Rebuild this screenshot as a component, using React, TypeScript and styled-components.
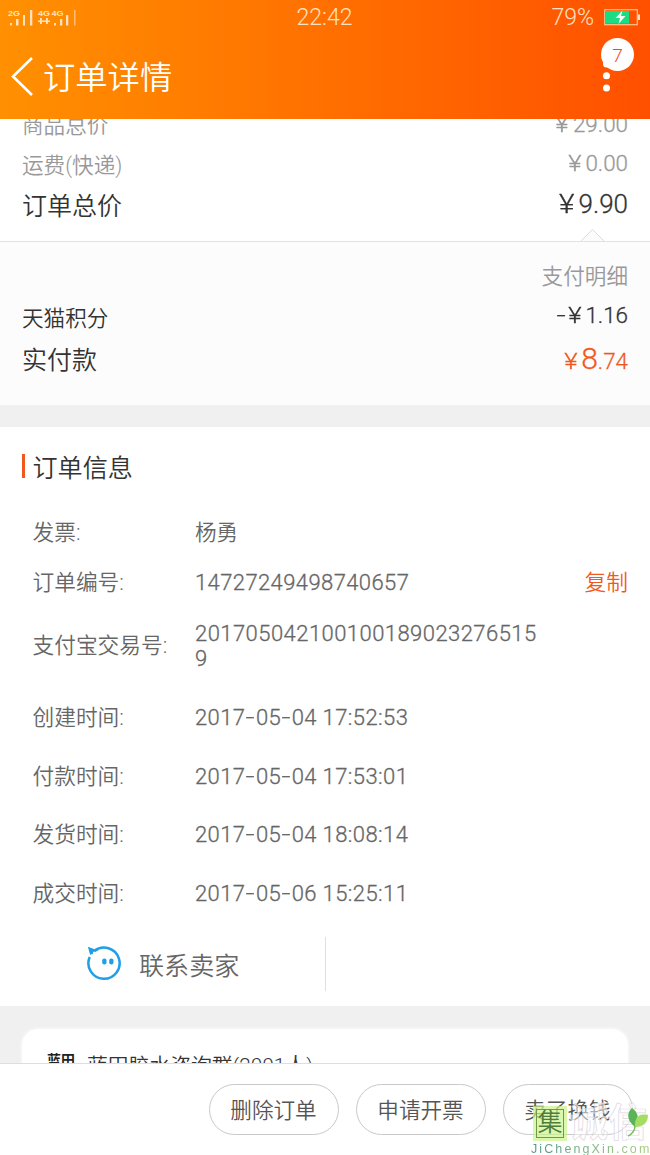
import React from "react";
import styled, { createGlobalStyle } from "styled-components";

const GlobalStyle = createGlobalStyle`
  * { box-sizing: border-box; }
  body { margin: 0; background: #f0f0f0; }
`;

const Screen = styled.div`
  position: relative;
  width: 650px;
  height: 1155px;
  overflow: hidden;
  display: flex;
  flex-direction: column;
  background: #f0f0f0;
  font-family: Roboto, "Noto Sans CJK SC", sans-serif;
  font-weight: 350;
  color: #666;
  white-space: nowrap;
`;

const Header = styled.header`
  height: 119px;
  flex: none;
  background: linear-gradient(to right, #ff9000, #ff5000);
  color: #fff;
`;

const StatusBar = styled.div`
  height: 35px;
  display: grid;
  grid-template-columns: 1fr auto 1fr;
  align-items: center;
  padding: 0 9px 0 8px;
  font-size: 23px;
  font-weight: 300;
  color: #ffe2c0;
`;

const StatusRight = styled.div`
  display: flex;
  justify-content: flex-end;
  align-items: center;
  gap: 10px;
  font-size: 23px;
`;

const NavBar = styled.div`
  height: 84px;
  display: flex;
  align-items: center;
  padding: 0 16px 0 11px;
`;

const PageTitle = styled.h1`
  margin: 2px auto 0 9px;
  font-size: 32.3px;
  font-weight: 350;
  line-height: 40px;
`;

const MoreButton = styled.div`
  position: relative;
  width: 33px;
  height: 56px;
  margin-bottom: 22px;
`;

const Badge = styled.span`
  position: absolute;
  top: 0;
  left: 0;
  width: 33px;
  height: 33px;
  border-radius: 50%;
  background: #fff;
  color: #ee4d22;
  font-size: 19px;
  line-height: 35px;
  text-align: center;
`;

const Totals = styled.section`
  position: relative;
  flex: none;
  height: 123px;
  padding: 0 22px 14px;
  display: flex;
  flex-direction: column;
  justify-content: flex-end;
  overflow: hidden;
  background: #fff;
  border-bottom: 1px solid #e2e2e2;
`;

const Payment = styled.section`
  flex: none;
  height: 163px;
  padding: 15px 22px 0;
  background: #fcfcfc;
`;

const OrderPanel = styled.section`
  flex: none;
  height: 579px;
  margin-top: 22px;
  padding: 26px 22px 15px;
  background: #fff;
  display: flex;
  flex-direction: column;
`;

const Notch = styled.svg`
  position: absolute;
  right: 45px;
  bottom: -1px;
`;

const SumRow = styled.div<{ $height: number; $color: string; $size: number }>`
  flex: none;
  height: ${(p) => p.$height}px;
  display: flex;
  justify-content: space-between;
  align-items: center;
  color: ${(p) => p.$color};
  font-size: ${(p) => p.$size}px;
  line-height: 30px;
`;

const Amount = styled.span<{ $size: number; $lift?: number; $accent?: boolean }>`
  margin-left: auto;
  padding-bottom: ${(p) => p.$lift ?? 0}px;
  font-size: ${(p) => p.$size}px;
  -webkit-text-stroke: ${(p) => (p.$lift ? 0.3 : 0)}px currentColor;
  ${(p) => p.$accent && "color: #f0591e;"}
`;

const Yen = styled.span`
  display: inline-block;
  margin-right: 5px;
  transform: scaleX(1.15);
`;

const Dash = styled.span<{ $gap: number }>`
  display: inline-block;
  margin: 0 ${(p) => p.$gap}px;
  transform: scaleX(1.45);
`;

const Big = styled.span`
  font-size: 30px;
`;

const SectionTitle = styled.h2`
  margin: 0 0 28px;
  height: 26px;
  display: flex;
  align-items: center;
  gap: 7.5px;
  color: #333;
  font-size: 25.1px;
  font-weight: 350;

  &::before {
    content: "";
    width: 3px;
    height: 24px;
    background: #f0591e;
  }
`;

const InfoRow = styled.div<{ $height: number }>`
  flex: none;
  height: ${(p) => p.$height}px;
  padding-left: 10.5px;
  display: grid;
  grid-template-columns: 162.5px 1fr auto;
  align-items: center;
  font-size: 21.7px;
  line-height: 25px;
`;

const InfoValue = styled.span<{ $spacing: number }>`
  width: 344px;
  font-size: 22px;
  letter-spacing: ${(p) => p.$spacing}px;
  -webkit-text-stroke: 0.3px currentColor;
  white-space: normal;
  word-break: break-all;
`;

const PersonName = styled.span`
  font-size: 21.6px;
`;

const CopyLink = styled.span`
  color: #f0591e;
`;

const Contact = styled.div`
  width: 326px;
  height: 54px;
  margin-top: auto;
  margin-left: -22px;
  border-right: 1px solid #e0e0e0;
  display: flex;
  align-items: center;
  gap: 17px;
  padding-left: 86px;
  font-size: 25.1px;
`;

const GroupArea = styled.section`
  flex: none;
  height: 57px;
  padding: 22px 21px 0;
  overflow: hidden;
  background: #f0f0f0;
`;

const GroupCard = styled.div`
  height: 80px;
  padding: 19px 25px;
  display: flex;
  align-items: flex-start;
  gap: 12px;
  border: 1px solid #f5f5f5;
  border-radius: 17px;
  box-shadow: 0 0 0 1px #f4f4f4;
  background: #fff;
  color: #333;
  font-size: 20.8px;
  line-height: 37px;
`;

const GroupLogo = styled.span`
  font-size: 14px;
  font-weight: 700;
  line-height: 25px;
  color: #222;
`;

const Footer = styled.footer`
  flex: none;
  height: 92px;
  border-top: 1px solid #dedede;
  padding: 20px 17px 0 0;
  display: flex;
  justify-content: flex-end;
  gap: 17px;
  background: #fff;
`;

const PillButton = styled.button`
  width: 130px;
  height: 51px;
  padding: 0 1px 2px 0;
  border: 1px solid #c9c9c9;
  border-radius: 26px;
  background: #fff;
  color: #555;
  font: inherit;
  font-size: 21.6px;
`;

const Watermark = styled.div`
  position: absolute;
  left: 531px;
  top: 1106px;
  width: 125px;
`;

const MarkTop = styled.div`
  display: flex;
  align-items: center;
  height: 35px;
`;

const MarkSeal = styled.span`
  width: 28px;
  height: 29px;
  margin: 0 5px 0 5px;
  border: 1px solid #6e9a4a;
  outline: 3px solid rgba(204, 243, 140, 0.7);
  background: rgba(204, 243, 140, 0.7);
  color: #4f7d3c;
  font-size: 25px;
  line-height: 26px;
  text-align: center;
`;

const MarkName = styled.span`
  font-size: 39px;
  line-height: 35px;
  font-weight: 700;
  color: rgba(255, 255, 255, 0.5);
  -webkit-text-stroke: 0.7px #ded8df;
`;

const MarkUrl = styled.div`
  width: max-content;
  font-family: "Liberation Sans", sans-serif;
  font-size: 12.5px;
  line-height: 14px;
  letter-spacing: 2.1px;
  font-weight: 400;
  background: linear-gradient(to right, #52988a, #a8cf7c);
  background-clip: text;
  color: transparent;
  margin-top: 1px;
`;

const Leaf = styled.svg`
  position: absolute;
  left: 92px;
  top: 1px;
`;

const NetLabel = styled.text`
  font: 700 8px "Liberation Sans", sans-serif;
  fill: #ffe2c0;
`;

const SignalIcon = () => (
  <svg width="70" height="20" viewBox="0 0 70 20" fill="#ffe2c0">
    <NetLabel x="0" y="7.500" textLength="12" lengthAdjust="spacingAndGlyphs">2G</NetLabel>
    <NetLabel x="30" y="7.500" textLength="12" lengthAdjust="spacingAndGlyphs">4G</NetLabel>
    <NetLabel x="43.500" y="7.500" textLength="12" lengthAdjust="spacingAndGlyphs">4G</NetLabel>
    <path d="M2 15h2v2.500H2zM8 11h2.500v6.500H8zM15 7h2v10.500h-2zM22 2h2.300v15.500H22zM46 15h2v2.500h-2zM52 11h2.300v6.500H52zM58 7h2.300v10.500H58z" />
    <path d="M66 2h1.500v15.500H66z" opacity=".6" />
    <path d="M32 10h1.800v2.500H36V14h-2.200v2H32v-2h-2v-1.500h2zM38 10h1.800v2.500H42V14h-2.200v2H38v-2h-2v-1.500h2z" />
  </svg>
);

const BatteryIcon = () => (
  <svg width="37" height="17" viewBox="0 0 37 17">
    <rect x="0.75" y="0.75" width="32.500" height="15" fill="none" stroke="#ffd9a8" />
    <rect x="2" y="2" width="23" height="12.500" fill="#1bdc83" />
    <path d="M34 5.500h2v5.500h-2z" fill="#ffe2c0" />
    <path d="M18.500 1.500 11.500 9h4.500l-1.500 6L21.500 7H17z" fill="#f4fff4" />
  </svg>
);

const BackIcon = () => (
  <svg width="23" height="40" viewBox="0 0 23 40" fill="none" stroke="#fff" strokeWidth="2.600">
    <path d="M21 1 2 19.500 21 38" />
  </svg>
);

const DotsIcon = () => (
  <svg width="12" height="56" viewBox="0 0 12 56" fill="#fff">
    <circle cx="5.500" cy="26" r="3.500" />
    <circle cx="5.500" cy="37.800" r="3.500" />
    <circle cx="5.500" cy="50" r="3.500" />
  </svg>
);

const SellerIcon = () => (
  <svg width="36" height="36" viewBox="0 0 36 36" fill="none" stroke="#1f9fe6" strokeWidth="2.500">
    <path d="M8.300 5A15.600 15.600 0 1 1 3.700 11" />
    <path d="M4.800 8.500 3 2l7 2.500-3.500.8L6 8" fill="#1f9fe6" strokeWidth="1.500" />
    <g fill="#1f9fe6" stroke="none">
      <rect x="16.200" y="12.500" width="4.300" height="6" rx="2" />
      <rect x="23.200" y="12.500" width="4.300" height="6" rx="2" />
    </g>
  </svg>
);

const Timestamp = ({ value }: { value: string }) => (
  <>
    {value.split("-").map((part, i) => (
      <React.Fragment key={i}>
        {i > 0 && <Dash $gap={1.9}>-</Dash>}
        {part}
      </React.Fragment>
    ))}
  </>
);

const orderInfo = [
  { label: "订单编号:", value: "14727249498740657", height: 49, spacing: 0.4, copy: true },
  { label: "支付宝交易号:", value: "2017050421001001890232765159", height: 77, spacing: 0.45 },
  { label: "创建时间:", value: "2017-05-04 17:52:53", height: 66, spacing: 0.4 },
  { label: "付款时间:", value: "2017-05-04 17:53:01", height: 52, spacing: 0.4 },
  { label: "发货时间:", value: "2017-05-04 18:08:14", height: 65, spacing: 0.4 },
  { label: "成交时间:", value: "2017-05-06 15:25:11", height: 52, spacing: 0.4 },
];

const actions = ["删除订单", "申请开票", "卖了换钱"];

export default function App() {
  return (
    <>
      <GlobalStyle />
      <Screen>
        <Header>
          <StatusBar>
            <SignalIcon />
            <span>22:42</span>
            <StatusRight>
              79%
              <BatteryIcon />
            </StatusRight>
          </StatusBar>
          <NavBar>
            <BackIcon />
            <PageTitle>订单详情</PageTitle>
            <MoreButton>
              <DotsIcon />
              <Badge>7</Badge>
            </MoreButton>
          </NavBar>
        </Header>

        <Totals>
          <SumRow $height={38} $color="#999" $size={21.6}>
            <span>商品总价</span>
            <Amount $size={22.4} $lift={4}><Yen>¥</Yen>29.00</Amount>
          </SumRow>
          <SumRow $height={41} $color="#999" $size={21.6}>
            <span>运费(快递)</span>
            <Amount $size={22.4} $lift={5}><Yen>¥</Yen>0.00</Amount>
          </SumRow>
          <SumRow $height={41} $color="#333" $size={25}>
            <span>订单总价</span>
            <Amount $size={26} $lift={5}><Yen>¥</Yen>9.90</Amount>
          </SumRow>
          <Notch width="25" height="14" viewBox="0 0 25 14">
            <path d="M.5 13.500 12.500 1.500l12 12" fill="#fcfcfc" stroke="#dcdcdc" />
          </Notch>
        </Totals>

        <Payment>
          <SumRow $height={40} $color="#999" $size={21.6}>
            <Amount $size={21.6}>支付明细</Amount>
          </SumRow>
          <SumRow $height={43} $color="#333" $size={21.6}>
            <span>天猫积分</span>
            <Amount $size={22.4} $lift={7}><Dash $gap={4.5}>-</Dash><Yen>¥</Yen>1.16</Amount>
          </SumRow>
          <SumRow $height={42} $color="#333" $size={25}>
            <span>实付款</span>
            <Amount $size={22.4} $lift={3} $accent><Yen>¥</Yen><Big>8</Big>.74</Amount>
          </SumRow>
        </Payment>

        <OrderPanel>
          <SectionTitle>订单信息</SectionTitle>
          <InfoRow $height={51}>
            <span>发票:</span>
            <PersonName>杨勇</PersonName>
          </InfoRow>
          {orderInfo.map((row) => (
            <InfoRow key={row.label} $height={row.height}>
              <span>{row.label}</span>
              <InfoValue $spacing={row.spacing}>
                <Timestamp value={row.value} />
              </InfoValue>
              {row.copy && <CopyLink>复制</CopyLink>}
            </InfoRow>
          ))}
          <Contact>
            <SellerIcon />
            联系卖家
          </Contact>
        </OrderPanel>

        <GroupArea>
          <GroupCard>
            <GroupLogo>蓝田</GroupLogo>
            <span>蓝田胶水咨询群(2001人)</span>
          </GroupCard>
        </GroupArea>

        <Footer>
          {actions.map((label) => (
            <PillButton key={label}>{label}</PillButton>
          ))}
        </Footer>

        <Watermark>
          <MarkTop>
            <MarkSeal>集</MarkSeal>
            <MarkName>诚信</MarkName>
          </MarkTop>
          <MarkUrl>JiChengXin.com</MarkUrl>
          <Leaf width="28" height="32" viewBox="0 0 28 32">
            <path d="M12 20C3 13 4 5 9 1c6 4 8 11 3 19z" fill="#58b457" />
            <path d="M12 20C11 11 16 6 25 8c0 8-5 12-13 12z" fill="#a5dc62" />
            <path d="M12 19c0 5-3 8-7 10" fill="none" stroke="#7dbf5a" strokeWidth="1.500" />
          </Leaf>
        </Watermark>
      </Screen>
    </>
  );
}
